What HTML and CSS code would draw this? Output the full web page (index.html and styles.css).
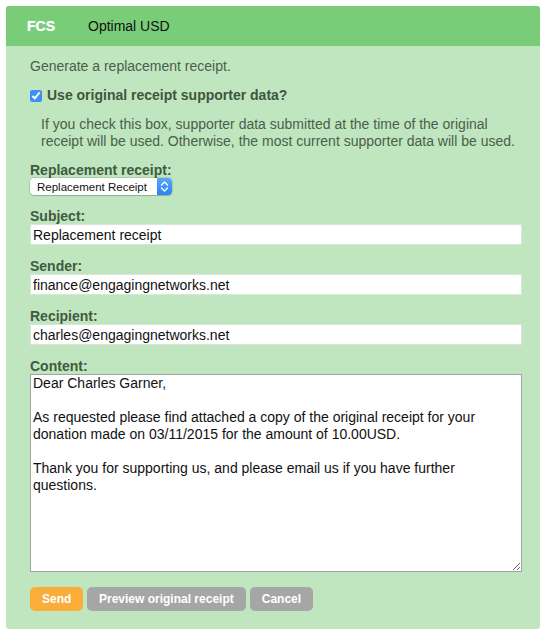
FILE: index.html
```html
<!DOCTYPE html>
<html>
<head>
<meta charset="utf-8">
<link rel="stylesheet" href="styles.css">
</head>
<body>
<div class="card">
  <div class="header">
    <span class="brand">FCS</span>
    <span class="title">Optimal USD</span>
  </div>
  <div class="body">
    <p class="intro">Generate a replacement receipt.</p>
    <label class="check-row"><input type="checkbox" checked class="check"><span>Use original receipt supporter data?</span></label>
    <p class="help">If you check this box, supporter data submitted at the time of the original receipt will be used. Otherwise, the most current supporter data will be used.</p>

    <div class="group group-select">
      <label class="lbl">Replacement receipt:</label>
      <div class="select-wrap">
        <select class="select"><option>Replacement Receipt</option></select>
        <span class="stepper"><svg width="9" height="13" viewBox="0 0 9 13"><path d="M1.5 5 L4.5 2 L7.5 5 M1.5 8 L4.5 11 L7.5 8" fill="none" stroke="#fff" stroke-width="1.4" stroke-linecap="round" stroke-linejoin="round"/></svg></span>
      </div>
    </div>

    <div class="group">
      <label class="lbl">Subject:</label>
      <input class="field" type="text" value="Replacement receipt">
    </div>
    <div class="group">
      <label class="lbl">Sender:</label>
      <input class="field" type="text" value="finance@engagingnetworks.net">
    </div>
    <div class="group">
      <label class="lbl">Recipient:</label>
      <input class="field" type="text" value="charles@engagingnetworks.net">
    </div>
    <div class="group">
      <label class="lbl">Content:</label>
      <textarea class="content">Dear Charles Garner,

As requested please find attached a copy of the original receipt for your donation made on 03/11/2015 for the amount of 10.00USD.

Thank you for supporting us, and please email us if you have further questions.</textarea>
    </div>

    <div class="buttons">
      <button class="btn btn-send">Send</button>
      <button class="btn btn-gray">Preview original receipt</button>
      <button class="btn btn-gray">Cancel</button>
    </div>
  </div>
</div>
</body>
</html>
```

FILE: styles.css
```css
html, body {
  margin: 0;
  padding: 0;
  background: #ffffff;
}
body {
  padding: 6px 5px 0 6px;
  font-family: "Liberation Sans", Arial, sans-serif;
  font-size: 14px;
}
.card {
  width: 534px;
  background: #bfe6be;
  border-radius: 3px;
  overflow: hidden;
}
.header {
  height: 40px;
  background: #79cd78;
  display: flex;
  align-items: center;
  padding-left: 21px;
  box-sizing: border-box;
}
.brand {
  color: #ffffff;
  font-weight: bold;
  font-size: 14px;
  width: 61px;
  text-shadow: 0 0 1px rgba(255,255,255,0.6);
}
.title {
  color: #111;
  font-size: 14px;
}
.body {
  padding: 12px 18px 18px 24px;
}
.intro {
  margin: 0;
  line-height: 17px;
  color: #4b5e4b;
}
.check-row {
  display: flex;
  align-items: center;
  margin-top: 12px;
  line-height: 17px;
  font-weight: bold;
  color: #3f553f;
}
.check {
  margin: 0 5px 0 0;
  width: 12px;
  height: 12px;
  accent-color: #3b8ff5;
}
.help {
  margin: 12px 0 0 11px;
  line-height: 17px;
  color: #4b5e4b;
}
.group {
  margin-top: 13px;
  display: flex;
  flex-direction: column;
  align-items: flex-start;
}
.group-select {
  margin-top: 12px;
}
.lbl {
  font-weight: bold;
  color: #3f5a3f;
  line-height: 16px;
}
.select-wrap {
  display: flex;
  width: 142px;
  height: 17px;
  background: #fff;
  border-radius: 4px;
  box-shadow: 0 0 0 0.5px rgba(0,0,0,0.2), 0 1px 1px rgba(0,0,0,0.15);
  overflow: hidden;
}
.select {
  flex: 1;
  appearance: none;
  -webkit-appearance: none;
  border: none;
  background: transparent;
  font-family: "Liberation Sans", Arial, sans-serif;
  font-size: 11.5px;
  color: #111;
  padding: 0 0 0 7px;
  margin: 0;
  height: 17px;
  outline: none;
}
.stepper {
  width: 15px;
  background: linear-gradient(#5aa7fb, #2a82f5);
  display: flex;
  align-items: center;
  justify-content: center;
}
.field {
  width: 492px;
  height: 21px;
  box-sizing: border-box;
  border: 1px solid #dfe3de;
  background: #fff;
  font-family: "Liberation Sans", Arial, sans-serif;
  font-size: 14px;
  color: #111;
  padding: 0 2px;
  margin: 0;
  outline: none;
}
.content {
  width: 492px;
  height: 198px;
  box-sizing: border-box;
  border: 1px solid #a3a3a3;
  background: #fff;
  font-family: "Liberation Sans", Arial, sans-serif;
  font-size: 14px;
  line-height: 17px;
  color: #111;
  padding: 0 2px;
  margin: 0;
  resize: vertical;
  outline: none;
}
.buttons {
  display: flex;
  gap: 4px;
  margin-top: 15px;
}
.btn {
  height: 24px;
  border: none;
  border-radius: 5px;
  color: #fff;
  font-family: "Liberation Sans", Arial, sans-serif;
  font-weight: bold;
  font-size: 12px;
  padding: 0 12px;
  margin: 0;
}
.btn-send {
  background: #fbad3a;
  width: 53px;
}
.btn-gray {
  background: #a6a6a6;
}
```
